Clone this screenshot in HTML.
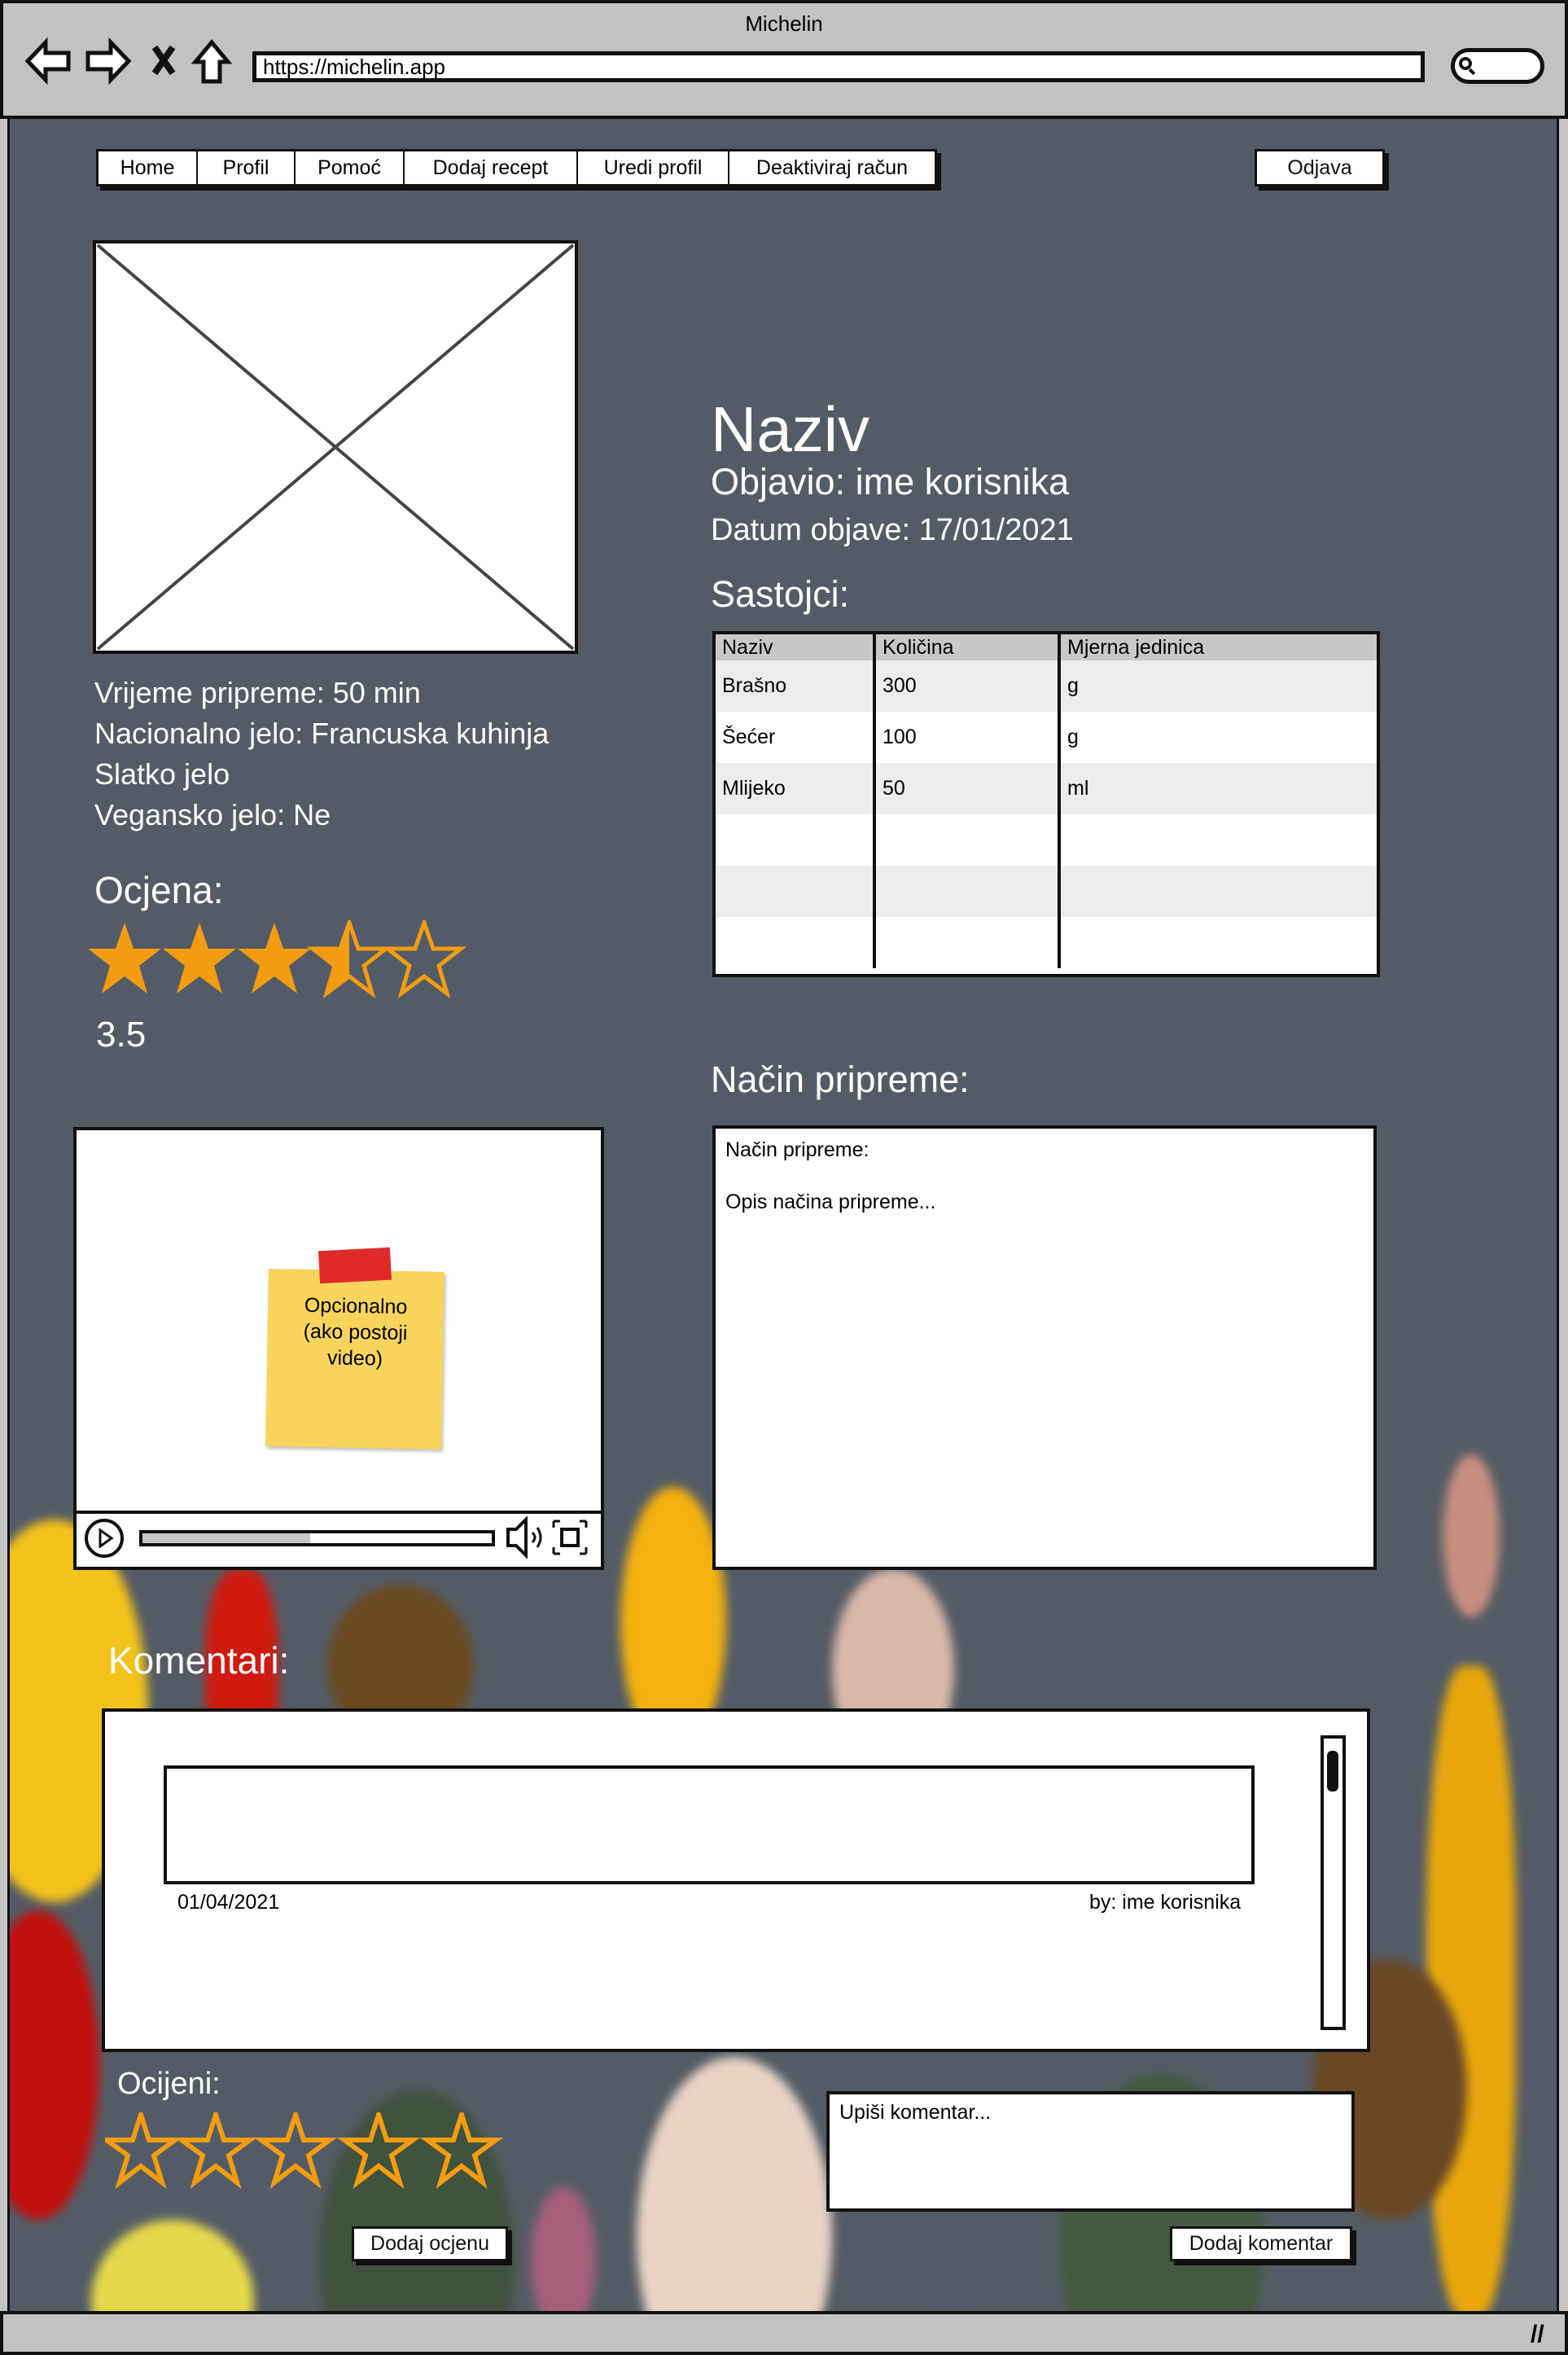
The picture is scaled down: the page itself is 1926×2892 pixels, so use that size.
<!DOCTYPE html>
<html><head><meta charset="utf-8"><style>
*{box-sizing:border-box;margin:0;padding:0}
html,body{overflow:hidden}
body{width:1926px;height:2892px;position:relative;font-family:"Liberation Sans",sans-serif;background:#c4c4c4}
.a{position:absolute}
.chrome{left:0;top:0;width:1926px;height:146px;background:#c2c2c2;border:4px solid #111}
.main{left:9px;top:146px;width:1906px;height:2692px;background:#535c66;overflow:hidden;border-left:3px solid #111;border-right:3px solid #111}
.bot{left:0;top:2838px;width:1926px;height:54px;background:#c2c2c2;border:4px solid #111}
.w{color:#fff}
.box{background:#fff;border:4px solid #111}
.btn{background:#fff;border:3px solid #111;box-shadow:5px 5px 0 #111;font-size:25px;display:flex;align-items:center;justify-content:center;color:#111}
.nav{display:flex;left:118px;top:183px;height:46px;border:3px solid #111;background:#fff;box-shadow:5px 5px 0 #111}
.nav div{border-right:2px solid #111;display:flex;align-items:center;justify-content:center;font-size:25px}
table{border-collapse:collapse;font-size:25px;width:100%}
td{height:63px;padding-left:8px;border-right:4px solid #111}
.blob{position:absolute;border-radius:50%;filter:blur(6px)}
</style></head><body>
<div class="a chrome"></div>
<div class="a" style="left:0;top:14px;width:1926px;text-align:center;font-size:26px">Michelin</div>
<svg class="a" style="left:30px;top:46px" width="260" height="58" viewBox="0 0 260 58">
<path d="M4 29 L26 6 L26 19 L54 19 L54 39 L26 39 L26 52 Z" fill="#fff" stroke="#111" stroke-width="5"/>
<path d="M128 29 L106 6 L106 19 L78 19 L78 39 L106 39 L106 52 Z" fill="#fff" stroke="#111" stroke-width="5"/>
<path d="M160 12 L182 44 M182 12 L160 44" stroke="#111" stroke-width="8"/>
<path d="M230 6 L250 30 L240 30 L240 54 L220 54 L220 30 L210 30 Z" fill="#fff" stroke="#111" stroke-width="5"/>
</svg>
<div class="a box" style="left:310px;top:63px;width:1440px;height:38px;border-width:5px;font-size:26px;padding-left:8px;line-height:28px">https://michelin.app</div>
<div class="a box" style="left:1782px;top:59px;width:115px;height:44px;border-radius:22px;border-width:5px"></div>
<div class="a" style="left:1792px;top:70px;width:16px;height:16px;border:4px solid #111;border-radius:50%"></div>
<div class="a" style="left:1806px;top:84px;width:4px;height:8px;background:#111;transform:rotate(-45deg)"></div>

<div class="a main">
 <div class="blob" style="left:-60px;top:1720px;width:230px;height:470px;background:#f3c21a"></div>
 <div class="blob" style="left:-40px;top:2200px;width:150px;height:380px;background:#c2100c"></div>
 <div class="blob" style="left:240px;top:1780px;width:90px;height:260px;background:#d01a10;border-radius:40%"></div>
 <div class="blob" style="left:390px;top:1800px;width:180px;height:200px;background:#6b4a20"></div>
 <div class="blob" style="left:750px;top:1680px;width:130px;height:330px;background:#f5b10f"></div>
 <div class="blob" style="left:1010px;top:1780px;width:150px;height:250px;background:#d9b8a8"></div>
 <div class="blob" style="left:1740px;top:1900px;width:110px;height:800px;background:#e8a80c;border-radius:40%"></div>
 <div class="blob" style="left:1600px;top:2260px;width:190px;height:320px;background:#6a4826"></div>
 <div class="blob" style="left:1760px;top:1640px;width:70px;height:200px;background:#c98f80"></div>
 <div class="blob" style="left:100px;top:2580px;width:200px;height:200px;background:#e6d84a"></div>
 <div class="blob" style="left:640px;top:2540px;width:80px;height:180px;background:#a7607a"></div>
 <div class="blob" style="left:770px;top:2380px;width:240px;height:440px;background:#e9d4c4"></div>
 <div class="blob" style="left:1040px;top:2700px;width:240px;height:200px;background:#6b3e2a"></div>
 <div class="blob" style="left:1290px;top:2400px;width:250px;height:420px;background:#3d5a30;opacity:.7"></div>
 <div class="blob" style="left:380px;top:2420px;width:240px;height:420px;background:#3a4e2e;opacity:.7"></div>
</div>
<div class="a bot"></div>
<div class="a" style="left:1880px;top:2850px;font-size:30px;font-weight:bold">//</div>

<div class="a nav">
<div style="width:122px">Home</div><div style="width:120px">Profil</div><div style="width:134px">Pomoć</div><div style="width:213px">Dodaj recept</div><div style="width:186px">Uredi profil</div><div style="width:252px;border:none">Deaktiviraj račun</div></div>
<div class="a btn" style="left:1541px;top:183px;width:160px;height:46px">Odjava</div>

<svg class="a" style="left:114px;top:295px" width="596" height="508"><rect x="2" y="2" width="592" height="504" fill="#fff" stroke="#111" stroke-width="4"/><path d="M6 6 L590 502 M590 6 L6 502" stroke="#444" stroke-width="4"/></svg>

<div class="a w" style="left:116px;top:826px;font-size:36px;line-height:50px">Vrijeme pripreme: 50 min<br>Nacionalno jelo: Francuska kuhinja<br>Slatko jelo<br>Vegansko jelo: Ne</div>
<div class="a w" style="left:116px;top:1066px;font-size:46px">Ocjena:</div>
<svg class="a" style="left:107px;top:1130px" width="470" height="95" viewBox="0 0 470 95">
<defs><polygon id="s" points="46,3 57,35 91,35 64,56 74,90 46,69 18,90 28,56 1,35 35,35"/></defs>
<use href="#s" fill="#f39c0f"/><use href="#s" x="92" fill="#f39c0f"/><use href="#s" x="184" fill="#f39c0f"/>
<polygon points="322,3 311,35 277,35 304,56 294,90 322,69" fill="#f39c0f"/>
<use href="#s" x="276" fill="none" stroke="#f39c0f" stroke-width="5"/>
<use href="#s" x="368" fill="none" stroke="#f39c0f" stroke-width="5"/></svg>
<div class="a w" style="left:118px;top:1246px;font-size:44px">3.5</div>

<div class="a w" style="left:873px;top:482px;font-size:78px">Naziv</div>
<div class="a w" style="left:873px;top:566px;font-size:45px">Objavio: ime korisnika</div>
<div class="a w" style="left:873px;top:630px;font-size:38px">Datum objave: 17/01/2021</div>
<div class="a w" style="left:873px;top:704px;font-size:45px">Sastojci:</div>
<div class="a box" style="left:875px;top:775px;width:820px;height:425px;overflow:hidden">
<table>
<tr style="background:#c8c8c8"><td style="height:32px;width:195px">Naziv</td><td style="height:32px;width:227px">Količina</td><td style="height:32px;border:none">Mjerna jedinica</td></tr>
<tr style="background:#ececec"><td>Brašno</td><td>300</td><td style="border:none">g</td></tr>
<tr style="background:#fff"><td>Šećer</td><td>100</td><td style="border:none">g</td></tr>
<tr style="background:#ececec"><td>Mlijeko</td><td>50</td><td style="border:none">ml</td></tr>
<tr style="background:#fff"><td></td><td></td><td style="border:none"></td></tr>
<tr style="background:#ececec"><td></td><td></td><td style="border:none"></td></tr>
<tr style="background:#fff"><td></td><td></td><td style="border:none"></td></tr>
</table></div>

<div class="a w" style="left:873px;top:1300px;font-size:45px">Način pripreme:</div>
<div class="a box" style="left:875px;top:1382px;width:816px;height:546px;font-size:25px;padding:10px 12px;line-height:32px">Način pripreme:<br><br>Opis načina pripreme...</div>

<div class="a box" style="left:90px;top:1384px;width:652px;height:544px"></div>
<div class="a" style="left:90px;top:1855px;width:652px;height:4px;background:#111"></div>
<div class="a" style="left:104px;top:1865px;width:48px;height:48px;border:4px solid #111;border-radius:50%"></div>
<svg class="a" style="left:120px;top:1877px" width="20" height="24"><path d="M3 2 L17 12 L3 22 Z" fill="none" stroke="#111" stroke-width="3"/></svg>
<div class="a" style="left:171px;top:1879px;width:437px;height:20px;border:4px solid #111;background:linear-gradient(90deg,#c8c8c8 0 48%,#fff 48%)"></div>
<svg class="a" style="left:620px;top:1862px" width="110" height="52"><path d="M4 16 L14 16 L26 4 L26 48 L14 36 L4 36 Z" fill="none" stroke="#111" stroke-width="4"/><path d="M34 20 Q40 26 34 32 M40 14 Q48 26 40 38" fill="none" stroke="#111" stroke-width="3"/><rect x="70" y="16" width="20" height="20" fill="none" stroke="#111" stroke-width="4"/><path d="M60 6 L68 6 M60 6 L60 14 M100 6 L92 6 M100 6 L100 14 M60 46 L68 46 M60 46 L60 38 M100 46 L92 46 M100 46 L100 38" stroke="#111" stroke-width="3"/></svg>
<div class="a" style="left:328px;top:1560px;width:216px;height:218px;background:#f8d45c;transform:rotate(1deg);font-size:25px;text-align:center;padding-top:28px;line-height:32px;box-shadow:2px 3px 4px rgba(0,0,0,.25)">Opcionalno<br>(ako postoji<br>video)</div>
<div class="a" style="left:392px;top:1534px;width:88px;height:40px;background:#e02a2a;transform:rotate(-3deg)"></div>

<div class="a w" style="left:133px;top:2012px;font-size:46px">Komentari:</div>
<div class="a box" style="left:125px;top:2098px;width:1558px;height:422px"></div>
<div class="a box" style="left:201px;top:2168px;width:1340px;height:146px"></div>
<div class="a" style="left:218px;top:2322px;font-size:25px">01/04/2021</div>
<div class="a" style="left:1338px;top:2322px;font-size:25px">by: ime korisnika</div>
<div class="a" style="left:1622px;top:2131px;width:31px;height:362px;border:4px solid #111;background:#fff"></div>
<div class="a" style="left:1630px;top:2150px;width:14px;height:50px;background:#111;border-radius:6px"></div>

<div class="a w" style="left:144px;top:2538px;font-size:38px">Ocijeni:</div>
<svg class="a" style="left:129px;top:2594px" width="490" height="95" viewBox="0 0 490 95">
<defs><polygon id="t" points="44,3 54,34 86,34 60,53 70,86 44,66 18,86 28,53 2,34 34,34"/></defs>
<g fill="none" stroke="#f39c0f" stroke-width="6"><use href="#t"/><use href="#t" x="92"/><use href="#t" x="190"/><use href="#t" x="292"/><use href="#t" x="394"/></g></svg>
<div class="a btn" style="left:432px;top:2734px;width:192px;height:43px">Dodaj ocjenu</div>
<div class="a box" style="left:1015px;top:2568px;width:649px;height:148px;font-size:25px;padding:8px 12px">Upiši komentar...</div>
<div class="a btn" style="left:1437px;top:2734px;width:224px;height:43px">Dodaj komentar</div>
</body></html>
